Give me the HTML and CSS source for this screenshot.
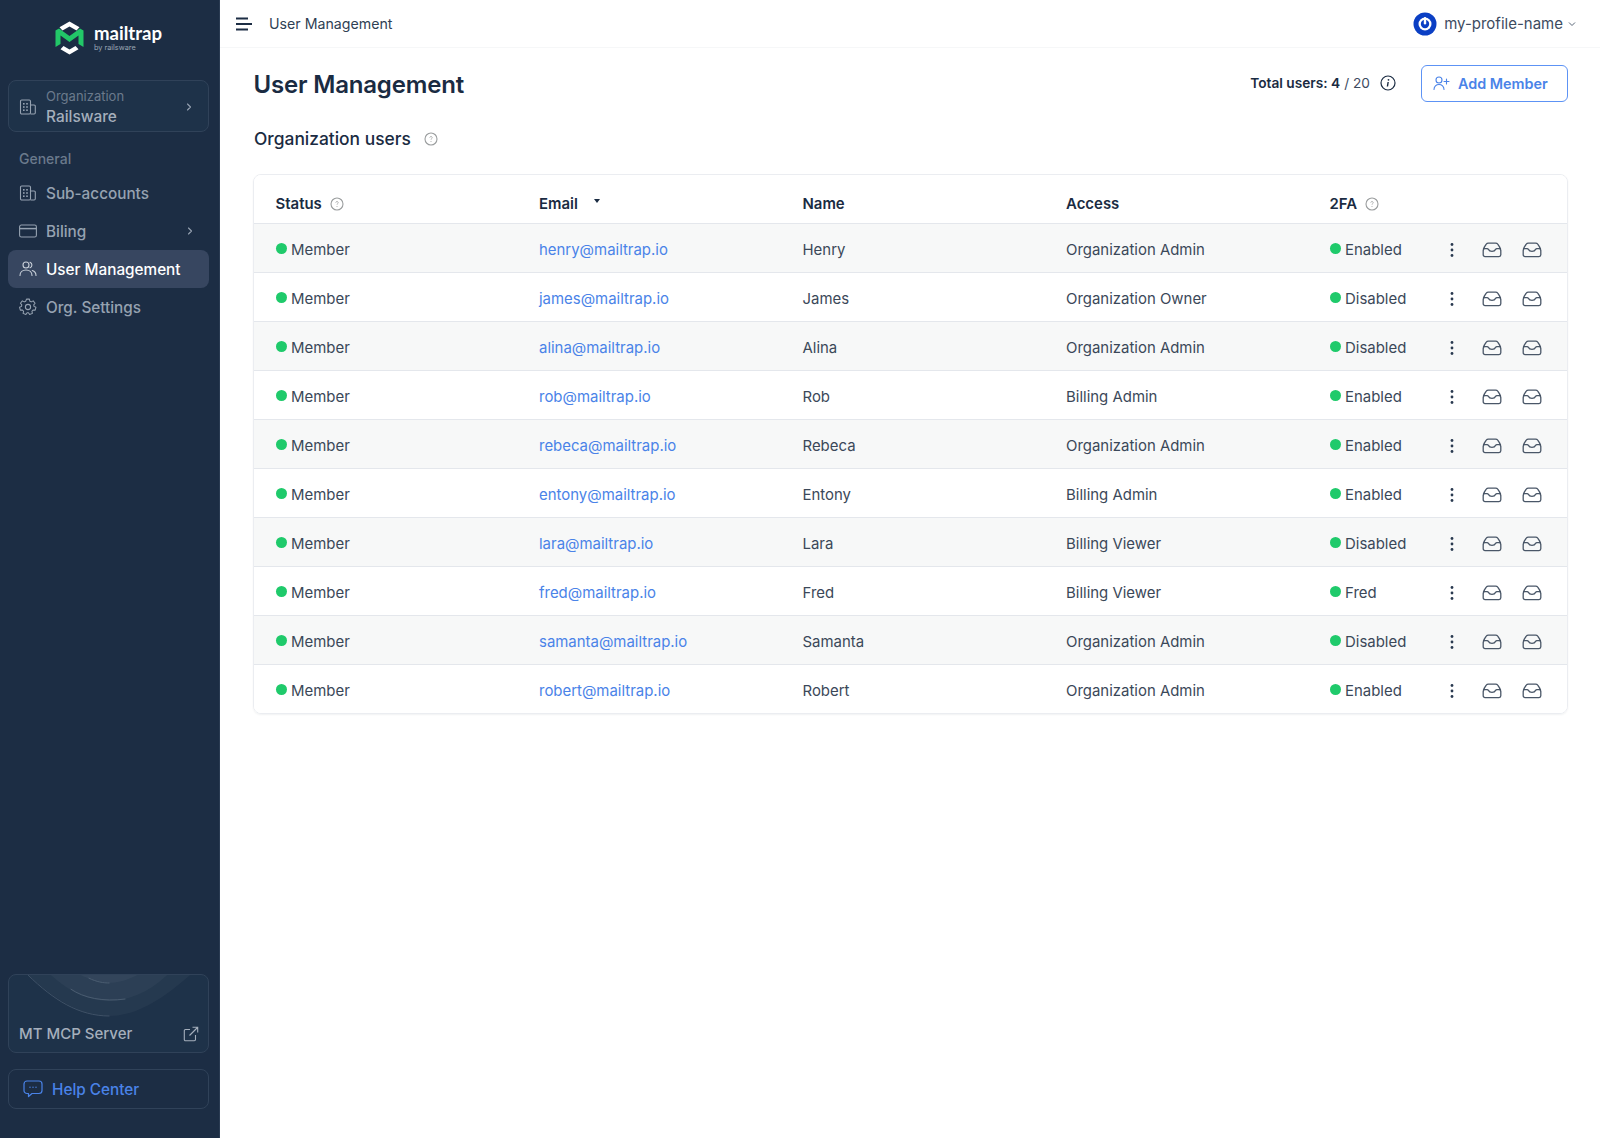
FILE: index.html
```html
<!DOCTYPE html>
<html lang="en">
<head>
<meta charset="utf-8">
<title>User Management</title>
<link rel="stylesheet" href="styles.css">
</head>
<body>
<svg class="defs" width="0" height="0" aria-hidden="true">
  <symbol id="building" viewBox="0 0 18 18"><g fill="none" stroke="currentColor" stroke-width="1.1" stroke-linejoin="round"><rect x="1.5" y="2" width="10" height="14" rx="1.2"/><path d="M11.5 7h3.6a1.2 1.2 0 0 1 1.2 1.2v6.6a1.2 1.2 0 0 1-1.2 1.2h-3.6"/></g><g fill="currentColor"><rect x="4" y="5" width="1.6" height="1.6"/><rect x="7.2" y="5" width="1.6" height="1.6"/><rect x="4" y="8.2" width="1.6" height="1.6"/><rect x="7.2" y="8.2" width="1.6" height="1.6"/><rect x="4" y="11.4" width="1.6" height="1.6"/><rect x="7.2" y="11.4" width="1.6" height="1.6"/></g></symbol>
  <symbol id="chev" viewBox="0 0 8 10"><path d="M2.5 2l3 3-3 3" fill="none" stroke="currentColor" stroke-width="1.1" stroke-linecap="round" stroke-linejoin="round"/></symbol>
  <symbol id="help" viewBox="0 0 14 14"><circle cx="7" cy="7" r="6" fill="none" stroke="currentColor" stroke-width="1.1"/><path d="M5.8 5.6a1.2 1.2 0 1 1 1.8 1.1c-.4.3-.6.5-.6.9" fill="none" stroke="currentColor" stroke-width=".8"/><circle cx="7" cy="9.6" r=".5" fill="currentColor"/></symbol>
  <symbol id="inbox" viewBox="0 0 20 16"><path d="M1.2 8.500C1.800 6 3 3.500 4.200 2.200 4.800 1.500 5.500 1.200 6.400 1.200h7.200c.9 0 1.600.3 2.200 1C17 3.500 18.200 6 18.800 8.500V12.800a1.800 1.800 0 0 1-1.800 1.800H3a1.800 1.800 0 0 1-1.800-1.800z" fill="none" stroke="currentColor" stroke-width="1.300" stroke-linejoin="round"/><path d="M1.500 6.600h3.600c.6 0 1 .3 1.300.8.500 1 1.800 1.900 3.600 1.900s3.100-.9 3.600-1.900c.3-.5.7-.8 1.300-.8h3.600" fill="none" stroke="currentColor" stroke-width="1.300" stroke-linecap="round"/></symbol>
  <symbol id="kebab" viewBox="0 0 4 16"><circle cx="2" cy="2.500" r="1.400" fill="currentColor"/><circle cx="2" cy="8" r="1.400" fill="currentColor"/><circle cx="2" cy="13.500" r="1.400" fill="currentColor"/></symbol>
</svg>

<div class="app">
  <aside class="sidebar">
    <div class="logo">
      <svg class="logo-mark" viewBox="0 0 29 34" aria-hidden="true">
        <path d="M14.500 0.500L24.500 6.300 21.500 9.500 14.500 5.400 7.500 9.500 4.500 6.300z" fill="#fff"/>
        <path d="M14.500 33.500L5.500 28.300 8.500 25 14.500 28.500 20.500 25 23.500 28.300z" fill="#fff"/>
        <path d="M0.500 9.500L4 7.500 14.500 15 25 7.500 28.500 9.500V26L23.500 23V14.500L14.500 21 5.500 14.500V23L0.500 26z" fill="#22c768"/>
      </svg>
      <div class="logo-text">
        <span class="logo-name">mailtrap</span>
        <span class="logo-by">by railsware</span>
      </div>
    </div>

    <div class="org">
      <svg class="nav-icon"><use href="#building"/></svg>
      <div class="org-text">
        <span class="org-label">Organization</span>
        <span class="org-name">Railsware</span>
      </div>
      <svg class="chev"><use href="#chev"/></svg>
    </div>

    <div class="nav-title">General</div>
    <nav class="nav">
      <a class="nav-item"><svg class="nav-icon"><use href="#building"/></svg>Sub-accounts</a>
      <a class="nav-item"><svg class="nav-icon" viewBox="0 0 18 14"><rect x=".6" y="1" width="16.800" height="12" rx="1.800" fill="none" stroke="currentColor" stroke-width="1.100"/><path d="M.6 4.600h16.800" stroke="currentColor" stroke-width="1.500"/></svg>Biling<svg class="chev"><use href="#chev"/></svg></a>
      <a class="nav-item active"><svg class="nav-icon" viewBox="0 0 18 18"><g fill="none" stroke="currentColor" stroke-width="1.100" stroke-linecap="round"><circle cx="7" cy="5" r="3"/><path d="M1 15.500c0-3.500 2.700-5.500 6-5.500s6 2 6 5.500"/><path d="M11 2.200a3 3 0 0 1 0 5.600M13.300 10.500c2.200.7 3.700 2.500 3.700 5"/></g></svg>User Management</a>
      <a class="nav-item"><svg class="nav-icon" viewBox="0 0 18 18"><g fill="none" stroke="currentColor" stroke-width="1.100" stroke-linejoin="round"><path d="M7.500 1.500h3l.5 2.200 1.500.7 2-1.100 2 2.500-1.400 1.700.3 1.600 2 1-.8 3-2.300-.1-1.100 1.300.5 2.200-2.900 1.200-1.300-1.800H8.100l-1.300 1.800-2.900-1.200.5-2.200-1.100-1.300-2.300.1-.8-3 2-1 .3-1.600L1.100 5.800l2-2.500 2 1.100 1.500-.7z" transform="translate(.4 -.3) scale(.95)"/><circle cx="9" cy="9" r="2.600"/></g></svg>Org. Settings</a>
    </nav>

    <div class="side-bottom">
      <div class="mcp">
        <svg class="mcp-arcs" viewBox="0 0 200 44" preserveAspectRatio="none" aria-hidden="true">
          <path d="M19 0C50 28 75 41 100 41S150 28 182 0z" fill="#ffffff" fill-opacity=".035"/>
          <path d="M42 0C62 18 82 26 100 26S140 18 159 0z" fill="#ffffff" fill-opacity=".035"/>
          <path d="M72 0C82 5 92 8 100 8S120 5 129 0z" fill="#ffffff" fill-opacity=".035"/>
          <path d="M19 0C45 25 70 41 101 41" fill="none" stroke="#3f5166" stroke-width="1"/>
          <path d="M62 14C75 23 95 27 117 24" fill="none" stroke="#4a5c70" stroke-width="1"/>
          <path d="M80 3C88 7 95 8 101 8" fill="none" stroke="#4a5c70" stroke-width="1"/>
        </svg>
        <span class="mcp-label">MT MCP Server</span>
        <svg class="mcp-ext" viewBox="0 0 16 16" aria-hidden="true"><path d="M7 3.500H2.500A1.200 1.200 0 0 0 1.300 4.700v8.800a1.200 1.200 0 0 0 1.200 1.200h8.800a1.200 1.200 0 0 0 1.200-1.200V9M6.500 9.500L14.500 1.500M9.500 1.300h5.200v5.200" fill="none" stroke="currentColor" stroke-width="1.100"/></svg>
      </div>
      <a class="help">
        <svg class="help-icon" viewBox="0 0 20 18" aria-hidden="true"><path d="M4 1h12a3 3 0 0 1 3 3v6.500a3 3 0 0 1-3 3H9l-3.500 3v-3H4a3 3 0 0 1-3-3V4a3 3 0 0 1 3-3z" fill="none" stroke="currentColor" stroke-width="1.200" stroke-linejoin="round"/><g fill="currentColor"><circle cx="7" cy="7.200" r=".7"/><circle cx="10" cy="7.200" r=".7"/><circle cx="13" cy="7.200" r=".7"/></g></svg>
        Help Center
      </a>
    </div>
  </aside>

  <div class="main">
    <header class="topbar">
      <svg class="burger" viewBox="0 0 18 14" aria-hidden="true"><path d="M1 1.500h12M1 7h16M1 12.500h12" fill="none" stroke="currentColor" stroke-width="2"/></svg>
      <span class="crumb">User Management</span>
      <div class="profile">
        <svg class="avatar" viewBox="0 0 24 24" aria-hidden="true"><circle cx="12" cy="12" r="11.500" fill="#0b3fc4"/><circle cx="12" cy="12" r="6.500" fill="#fff"/><circle cx="12" cy="12" r="4.200" fill="#0b3fc4"/><rect x="10.800" y="5" width="2.400" height="7.500" rx="1.200" fill="#fff"/></svg>
        <span>my-profile-name</span>
        <svg class="caret" viewBox="0 0 8 6" aria-hidden="true"><path d="M1 1.500l3 3 3-3" fill="none" stroke="currentColor" stroke-width="1"/></svg>
      </div>
    </header>

    <main class="content">
      <div class="page-head">
        <h1>User Management</h1>
        <div class="total"><b>Total users: 4</b> / 20
          <svg class="info" viewBox="0 0 16 16" aria-hidden="true"><circle cx="8" cy="8" r="7" fill="none" stroke="currentColor" stroke-width="1.200"/><circle cx="8.500" cy="4.800" r=".9" fill="currentColor"/><path d="M8.200 7l-.8 4.500" stroke="currentColor" stroke-width="1.400"/></svg>
        </div>
        <a class="add-btn">
          <svg class="add-icon" viewBox="0 0 18 14" aria-hidden="true"><g fill="none" stroke="currentColor" stroke-width="1.100" stroke-linecap="round"><circle cx="6" cy="4" r="3"/><path d="M1 13.500c0-3.200 2.200-5 5-5s5 1.800 5 5M13.500 3v5M11 5.500h5"/></g></svg>
          Add Member
        </a>
      </div>

      <h2 class="section">Organization users <svg class="help-q section-q"><use href="#help"/></svg></h2>

      <div class="table-card">
        <div class="row head">
          <div class="cell">Status <svg class="help-q"><use href="#help"/></svg></div>
          <div class="cell">Email<span class="sort"></span></div>
          <div class="cell">Name</div>
          <div class="cell">Access</div>
          <div class="cell">2FA <svg class="help-q"><use href="#help"/></svg></div>
          <div class="cell actions"></div>
        </div>
        <div class="row">
          <div class="cell"><i class="dot"></i>Member</div><div class="cell"><a class="email">henry@mailtrap.io</a></div><div class="cell">Henry</div><div class="cell">Organization Admin</div><div class="cell"><i class="dot"></i>Enabled</div>
          <div class="cell actions"><svg class="kebab"><use href="#kebab"/></svg><svg class="inbox"><use href="#inbox"/></svg><svg class="inbox"><use href="#inbox"/></svg></div>
        </div>
        <div class="row">
          <div class="cell"><i class="dot"></i>Member</div><div class="cell"><a class="email">james@mailtrap.io</a></div><div class="cell">James</div><div class="cell">Organization Owner</div><div class="cell"><i class="dot"></i>Disabled</div>
          <div class="cell actions"><svg class="kebab"><use href="#kebab"/></svg><svg class="inbox"><use href="#inbox"/></svg><svg class="inbox"><use href="#inbox"/></svg></div>
        </div>
        <div class="row">
          <div class="cell"><i class="dot"></i>Member</div><div class="cell"><a class="email">alina@mailtrap.io</a></div><div class="cell">Alina</div><div class="cell">Organization Admin</div><div class="cell"><i class="dot"></i>Disabled</div>
          <div class="cell actions"><svg class="kebab"><use href="#kebab"/></svg><svg class="inbox"><use href="#inbox"/></svg><svg class="inbox"><use href="#inbox"/></svg></div>
        </div>
        <div class="row">
          <div class="cell"><i class="dot"></i>Member</div><div class="cell"><a class="email">rob@mailtrap.io</a></div><div class="cell">Rob</div><div class="cell">Billing Admin</div><div class="cell"><i class="dot"></i>Enabled</div>
          <div class="cell actions"><svg class="kebab"><use href="#kebab"/></svg><svg class="inbox"><use href="#inbox"/></svg><svg class="inbox"><use href="#inbox"/></svg></div>
        </div>
        <div class="row">
          <div class="cell"><i class="dot"></i>Member</div><div class="cell"><a class="email">rebeca@mailtrap.io</a></div><div class="cell">Rebeca</div><div class="cell">Organization Admin</div><div class="cell"><i class="dot"></i>Enabled</div>
          <div class="cell actions"><svg class="kebab"><use href="#kebab"/></svg><svg class="inbox"><use href="#inbox"/></svg><svg class="inbox"><use href="#inbox"/></svg></div>
        </div>
        <div class="row">
          <div class="cell"><i class="dot"></i>Member</div><div class="cell"><a class="email">entony@mailtrap.io</a></div><div class="cell">Entony</div><div class="cell">Billing Admin</div><div class="cell"><i class="dot"></i>Enabled</div>
          <div class="cell actions"><svg class="kebab"><use href="#kebab"/></svg><svg class="inbox"><use href="#inbox"/></svg><svg class="inbox"><use href="#inbox"/></svg></div>
        </div>
        <div class="row">
          <div class="cell"><i class="dot"></i>Member</div><div class="cell"><a class="email">lara@mailtrap.io</a></div><div class="cell">Lara</div><div class="cell">Billing Viewer</div><div class="cell"><i class="dot"></i>Disabled</div>
          <div class="cell actions"><svg class="kebab"><use href="#kebab"/></svg><svg class="inbox"><use href="#inbox"/></svg><svg class="inbox"><use href="#inbox"/></svg></div>
        </div>
        <div class="row">
          <div class="cell"><i class="dot"></i>Member</div><div class="cell"><a class="email">fred@mailtrap.io</a></div><div class="cell">Fred</div><div class="cell">Billing Viewer</div><div class="cell"><i class="dot"></i>Fred</div>
          <div class="cell actions"><svg class="kebab"><use href="#kebab"/></svg><svg class="inbox"><use href="#inbox"/></svg><svg class="inbox"><use href="#inbox"/></svg></div>
        </div>
        <div class="row">
          <div class="cell"><i class="dot"></i>Member</div><div class="cell"><a class="email">samanta@mailtrap.io</a></div><div class="cell">Samanta</div><div class="cell">Organization Admin</div><div class="cell"><i class="dot"></i>Disabled</div>
          <div class="cell actions"><svg class="kebab"><use href="#kebab"/></svg><svg class="inbox"><use href="#inbox"/></svg><svg class="inbox"><use href="#inbox"/></svg></div>
        </div>
        <div class="row">
          <div class="cell"><i class="dot"></i>Member</div><div class="cell"><a class="email">robert@mailtrap.io</a></div><div class="cell">Robert</div><div class="cell">Organization Admin</div><div class="cell"><i class="dot"></i>Enabled</div>
          <div class="cell actions"><svg class="kebab"><use href="#kebab"/></svg><svg class="inbox"><use href="#inbox"/></svg><svg class="inbox"><use href="#inbox"/></svg></div>
        </div>
      </div>
    </main>
  </div>
</div>
</body>
</html>
```

FILE: styles.css
```css
* { box-sizing: border-box; }
html, body { margin: 0; height: 100%; }
body { font-family: Inter, "Liberation Sans", sans-serif; color: #1a2b42; background: #fff; font-size: 15px; }
.defs { position: absolute; }
.app { display: flex; height: 1138px; overflow: hidden; }

/* sidebar */
.sidebar { width: 220px; flex: none; background: #1c2d44; border-right: 1px solid #2a3b52; display: flex; flex-direction: column; padding: 0 10px 0 8px; color: #96a2b1; }
.logo { display: flex; align-items: center; gap: 10px; height: 76px; padding: 0 0 0 47px; }
.logo-mark { flex: none; width: 29px; height: 34px; }
.logo-text { display: flex; flex-direction: column; color: #fff; }
.logo-name { font-family: Lato, Inter, sans-serif; font-size: 18.6px; line-height: 19px; font-weight: 700; }
.logo-by { font-size: 7.3px; line-height: 9px; color: #9aa6b4; }
.org { display: flex; align-items: center; height: 52px; border: 1px solid #304259; border-radius: 8px; background: #1e3249; padding: 1px 15px 0 10px; margin-top: 4px; }
.org .nav-icon { margin-right: 9px; }
.org-text { display: flex; flex-direction: column; flex: 1; }
.org-label { font-size: 13px; line-height: 19px; color: #6b7a8c; }
.org-name { font-size: 15.4px; line-height: 21px; font-weight: 500; color: #a5afbc; }
.chev { width: 8px; height: 10px; color: #96a2b1; flex: none; }
.nav-title { font-size: 14px; line-height: 20px; font-weight: 500; color: #6b7a8c; padding: 0 11px; margin-top: 17px; }
.nav { display: flex; flex-direction: column; margin-top: 5px; }
.nav-item { display: flex; align-items: center; height: 38px; padding: 0 15px 0 11px; font-size: 15.3px; font-weight: 500; color: #96a2b1; border-radius: 8px; }
.nav-item .chev { margin-left: auto; }
.nav-item.active { background: #374660; color: #fff; }
.nav-icon { width: 18px; height: 18px; flex: none; margin-right: 9px; color: #96a2b1; }
.nav-item.active .nav-icon { color: #c8cfd8; }
.side-bottom { margin-top: auto; display: flex; flex-direction: column; gap: 16px; padding-bottom: 29px; }
.mcp { position: relative; height: 79px; border: 1px solid #304259; border-radius: 8px; background: #1e3249; overflow: hidden; display: flex; align-items: flex-end; padding: 0 9px 7px 10px; color: #a5afbc; }
.mcp-arcs { position: absolute; left: 0; top: 0; width: 100%; height: 44px; }
.mcp-label { position: relative; font-size: 15px; line-height: 22px; font-weight: 500; flex: 1; }
.mcp-ext { position: relative; width: 16px; height: 16px; margin-bottom: 3px; }
.help { display: flex; align-items: center; gap: 9px; height: 40px; border: 1px solid #304259; border-radius: 8px; padding: 0 14px; font-size: 15.3px; font-weight: 500; color: #4a83e8; }
.help-icon { width: 20px; height: 18px; flex: none; margin-top: -1px; }

/* main */
.main { flex: 1; min-width: 0; display: flex; flex-direction: column; }
.topbar { display: flex; align-items: center; height: 48px; border-bottom: 1px solid #f6f7f8; padding: 0 24px 0 15px; font-size: 14.2px; color: #2f3f54; }
.burger { width: 18px; height: 14px; color: #1c2d44; margin-right: 16px; flex: none; }
.profile { margin-left: auto; display: flex; align-items: center; font-size: 15px; color: #3d4b5f; }
.avatar { width: 24px; height: 24px; margin-right: 7px; }
.caret { width: 8px; height: 6px; margin-left: 5px; color: #5a6778; }
.content { padding: 0 32px 0 33px; }
.page-head { display: flex; align-items: center; height: 70px; }
h1 { margin: 4px 0 0 .5px; font-size: 24px; line-height: 32px; font-weight: 600; letter-spacing: -.18px; color: #1a2b42; flex: 1; }
.total { font-size: 13.7px; color: #3d4b5f; display: flex; align-items: center; gap: 4px; }
.total b { font-weight: 600; color: #1a2b42; }
.info { width: 16px; height: 16px; margin-left: 6px; color: #1a2b42; }
.add-btn { display: flex; align-items: center; gap: 7px; width: 147px; height: 37px; margin-left: 25px; padding-left: 11px; border: 1px solid #5d93f5; border-radius: 6px; color: #4a83e8; font-weight: 600; font-size: 14.4px; }
.add-icon { width: 18px; height: 14px; flex: none; }
.section { margin: 1px 0 0 1px; height: 40px; display: flex; align-items: center; font-size: 17.4px; font-weight: 500; color: #1a2b42; padding-bottom: 1px; }
.help-q { width: 14px; height: 14px; color: #9a9d9e; flex: none; margin-left: 8px; }
.section-q { margin-left: 13px; }

/* table */
.table-card { margin-top: 15px; border: 1px solid #ebedf1; border-radius: 8px; overflow: hidden; box-shadow: 0 1px 2px rgba(20,30,50,.06); }
.row { display: grid; grid-template-columns: 263.5px 263.5px 263.5px 263.5px 110px 1fr; height: 49px; align-items: center; padding: 3px 0 0 21.5px; background: #fff; border-top: 1px solid #e4e7ec; font-size: 14.95px; color: #3b4859; }
.row:nth-child(even) { background: #f7f8f8; }
.row.head { height: 48px; border-top: 0; color: #1a2b42; font-weight: 600; padding-top: 9px; }
.cell { display: flex; align-items: center; white-space: nowrap; }
.dot { width: 11px; height: 11px; border-radius: 50%; background: #1fca6b; margin-right: 4.5px; flex: none; position: relative; top: -1.5px; }
.email { color: #4a83e8; }
.sort { width: 0; height: 0; border-left: 3px solid transparent; border-right: 3px solid transparent; border-top: 4px solid #1a2b42; margin-left: 16px; margin-top: -6px; }
.actions { justify-content: flex-start; color: #4a5768; }
.kebab { width: 4px; height: 16px; margin-left: 10px; flex: none; color: #2a3a50; }
.inbox { width: 20px; height: 16px; flex: none; margin-left: 20px; color: #4a5768; }
.kebab + .inbox { margin-left: 28px; }
```
